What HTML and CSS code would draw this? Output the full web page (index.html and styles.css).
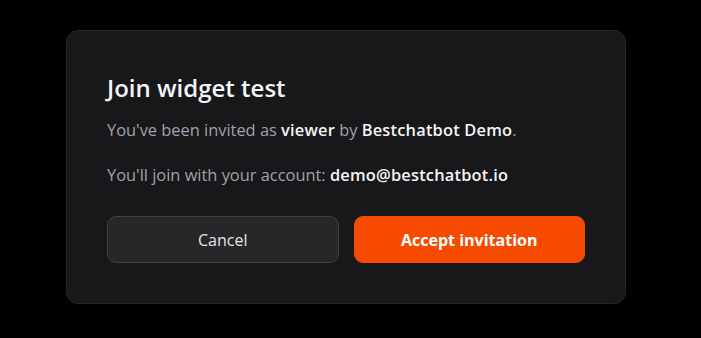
FILE: index.html
```html
<!DOCTYPE html>
<html>
<head>
<meta charset="utf-8">
<link rel="stylesheet" href="styles.css">
</head>
<body>
<div class="stage">
  <div class="card">
    <h1 class="title">Join widget test</h1>
    <p class="line first">You've been invited as <strong>viewer</strong> by <strong>Bestchatbot Demo</strong>.</p>
    <p class="line second">You'll join with your account: <strong>demo@bestchatbot.io</strong></p>
    <div class="actions">
      <button class="btn cancel">Cancel</button>
      <button class="btn accept">Accept invitation</button>
    </div>
  </div>
</div>
</body>
</html>
```
FILE: styles.css
```css
html, body {
  margin: 0;
  padding: 0;
  background: #000;
}
body {
  font-family: "Open Sans", "Noto Sans", sans-serif;
  width: 701px;
  height: 338px;
  overflow: hidden;
}
.stage {
  padding: 30px 0 0 66px;
}
.card {
  box-sizing: border-box;
  width: 560px;
  height: 274px;
  background: #18181b;
  border: 1px solid #27272a;
  border-radius: 12px;
  padding: 41px 40px 40px 40px;
}
.title {
  margin: 0;
  font-size: 24px;
  line-height: 32px;
  font-weight: 600;
  color: #f4f4f5;
}
.line {
  margin: 0;
  font-size: 16.4px;
  line-height: 24px;
  color: #a1a1aa;
}
.line strong {
  color: #f4f4f5;
  font-weight: 600;
  letter-spacing: 0.2px;
}
.first { margin-top: 14px; }
.second { margin-top: 21px; }
.actions {
  display: flex;
  gap: 15px;
  margin-top: 29px;
}
.btn {
  flex: 1;
  height: 47px;
  border-radius: 9px;
  font-family: inherit;
  font-size: 16px;
}
.cancel {
  background: #27272a;
  border: 1px solid #3f3f46;
  color: #e4e4e7;
}
.accept {
  background: #f54a00;
  border: 1px solid #f54a00;
  color: #fff;
  font-weight: 700;
}
```
